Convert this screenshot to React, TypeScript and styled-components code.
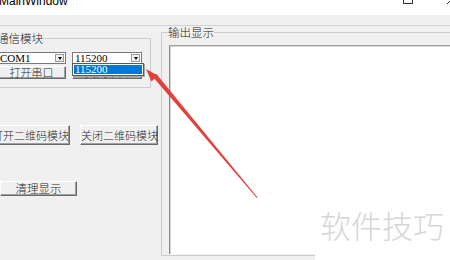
import styled, { createGlobalStyle } from 'styled-components';

const GlobalStyle = createGlobalStyle`
	html, body {
		margin: 0;
		padding: 0;
		background: #f0f0f0;
	}
	body {
		font-family: "Liberation Serif", "Noto Sans CJK SC", serif;
	}
`;

const CJK = `"Noto Sans CJK SC", "Liberation Sans", sans-serif`;

const App = (): JSX.Element => {
	return (
		<>
			<GlobalStyle />
			<StyledWindow>
				<StyledTitleBar>
					<StyledTitleRow>
						<StyledTitleText>MainWindow</StyledTitleText>
						<StyledControls>
							<StyledControl>
								<svg width="10" height="10" viewBox="0 0 10 10">
									<line x1="0" y1="5.5" x2="10" y2="5.5" stroke="#333" strokeWidth="1" />
								</svg>
							</StyledControl>
							<StyledControl>
								<svg width="10" height="10" viewBox="0 0 10 10">
									<rect x="0.5" y="0.5" width="9" height="9" fill="none" stroke="#333" strokeWidth="1" />
								</svg>
							</StyledControl>
							<StyledControl>
								<svg width="10" height="10" viewBox="0 0 10 10">
									<path d="M0 0 L10 10 M10 0 L0 10" stroke="#333" strokeWidth="1" />
								</svg>
							</StyledControl>
						</StyledControls>
					</StyledTitleRow>
				</StyledTitleBar>
				<StyledMenuBar />
				<StyledBody>
					<StyledLeftPanel>
						<StyledCommGroup>
							<StyledLegend>通信模块</StyledLegend>
							<StyledRow>
								<StyledCombo $w={69}>
									<StyledComboText>COM1</StyledComboText>
									<StyledComboArrow />
								</StyledCombo>
								<StyledCombo $w={70}>
									<StyledComboText>115200</StyledComboText>
									<StyledComboArrow />
									<StyledPopup>
										<StyledPopupItem>115200</StyledPopupItem>
									</StyledPopup>
								</StyledCombo>
							</StyledRow>
							<StyledRow $top={2}>
								<StyledButton $w={69} $h={13}>打开串口</StyledButton>
								<StyledButton $w={70} $h={13}>关闭串口</StyledButton>
							</StyledRow>
						</StyledCommGroup>
						<StyledQrRow>
							<StyledButton $w={79} $h={20}>打开二维码模块</StyledButton>
							<StyledButton $w={78} $h={20}>关闭二维码模块</StyledButton>
						</StyledQrRow>
						<StyledClearButton $w={77} $h={15} $fs={11.5}>清理显示</StyledClearButton>
					</StyledLeftPanel>
					<StyledOutputGroup>
						<StyledLegend $shift={-1}>输出显示</StyledLegend>
						<StyledTextEdit />
					</StyledOutputGroup>
				</StyledBody>
				<StyledArrow viewBox="0 0 450 260" width="450" height="260">
					<polygon points="152.8,76.8 156.2,73.8 257.6,197.6 257,198.2" fill="#e2403a" />
					<polygon points="146,69 158.2,75.8 151.4,81.6" fill="#e2403a" />
				</StyledArrow>
				<StyledWatermark>软件技巧</StyledWatermark>
			</StyledWindow>
		</>
	);
};

export default App;

const StyledWindow = styled.div`
	position: relative;
	width: 450px;
	height: 260px;
	overflow: hidden;
	background: #f0f0f0;
`;
const StyledTitleBar = styled.div`
	height: 15px;
	background: #fff;
	overflow: hidden;
`;
const StyledTitleRow = styled.div`
	display: flex;
	align-items: center;
	height: 30px;
	margin-top: -16px;
`;
const StyledTitleText = styled.div`
	margin-left: -1px;
	padding-top: 3px;
	font: 12px/12px "Liberation Sans", Arial, sans-serif;
	color: #000;
`;
const StyledControls = styled.div`
	display: flex;
	margin-left: auto;
	margin-right: -24px;
`;
const StyledControl = styled.div`
	display: flex;
	align-items: center;
	justify-content: center;
	width: 44px;
	height: 30px;
`;
const StyledMenuBar = styled.div`
	height: 10px;
	border-bottom: 1px solid #d2d2d2;
`;
const StyledBody = styled.div`
	display: flex;
	align-items: flex-start;
	height: 234px;
`;
const StyledLeftPanel = styled.div`
	display: flex;
	flex-direction: column;
	align-items: flex-start;
	flex-shrink: 0;
	width: 171px;
	margin-left: -10px;
`;
const StyledCommGroup = styled.fieldset`
	box-sizing: border-box;
	width: 159px;
	min-width: 0;
	margin: 6px 0 0 2px;
	padding: 8px 7px 8px 4px;
	border: 1px solid #cdcdcd;
`;
const StyledLegend = styled.legend<{ $shift?: number }>`
	padding: 0;
	margin-left: ${({ $shift }) => $shift ?? 0}px;
	font: 300 11.5px/12px ${CJK};
	color: #222;
`;
const StyledRow = styled.div<{ $top?: number }>`
	display: flex;
	gap: 6px;
	margin-top: ${({ $top }) => $top ?? 0}px;
`;
const StyledCombo = styled.div<{ $w: number }>`
	position: relative;
	display: flex;
	align-items: center;
	box-sizing: border-box;
	width: ${({ $w }) => $w}px;
	height: 12px;
	background: #fff;
	border: 1px solid #7a7a7a;
`;
const StyledComboText = styled.span`
	padding-left: 2px;
	font: 11px/10px "Liberation Serif", serif;
	color: #000;
`;
const StyledComboArrow = styled.span`
	display: flex;
	justify-content: center;
	box-sizing: border-box;
	width: 9px;
	height: 8px;
	margin-left: auto;
	margin-right: 1px;
	padding-top: 2px;
	background: #f0f0f0;
	border: 1px solid #9a9a9a;
	&::after {
		content: '';
		border-top: 3px solid #000;
		border-left: 2.5px solid transparent;
		border-right: 2.5px solid transparent;
		height: 0;
	}
`;
const StyledPopup = styled.div`
	position: absolute;
	left: -1px;
	top: 100%;
	z-index: 2;
	box-sizing: border-box;
	width: 72px;
	height: 13px;
	padding: 1px;
	background: #fff;
	border: 1px solid #5a5a5a;
	box-shadow: 1px 1px 0 #a8a8a8;
`;
const StyledPopupItem = styled.div`
	height: 9px;
	padding-left: 1px;
	background: #0078d7;
	color: #fff;
	font: 11px/9px "Liberation Serif", serif;
`;
type StyledButtonProps = {
	$w: number;
	$h: number;
	$fs?: number;
};
const StyledButton = styled.button<StyledButtonProps>`
	box-sizing: border-box;
	width: ${({ $w }) => $w}px;
	height: ${({ $h }) => $h}px;
	padding: 0;
	white-space: nowrap;
	overflow: visible;
	background: #f0f0f0;
	color: #2a2a2a;
	font: 300 ${({ $fs }) => $fs ?? 11}px/1 ${CJK};
	border-style: solid;
	border-width: 1px;
	border-color: #fff #696969 #696969 #fff;
	box-shadow: inset -1px -1px 0 #a0a0a0;
`;
const StyledQrRow = styled.div`
	display: flex;
	gap: 10px;
	margin: 37px 0 0 1px;
`;
const StyledClearButton = styled(StyledButton)`
	margin: 36px 0 0 10px;
`;
const StyledOutputGroup = styled.fieldset`
	box-sizing: border-box;
	flex-shrink: 0;
	width: 300px;
	min-width: 0;
	margin: 0;
	padding: 7px 0 1px 7px;
	border: 1px solid #cdcdcd;
	border-right: none;
`;
const StyledTextEdit = styled.div`
	height: 208px;
	background: #fff;
	border-top: 1px solid #a0a0a0;
	border-left: 1px solid #8a8a8a;
	box-shadow: inset 1px 1px 0 #d6d6d6;
`;
const StyledArrow = styled.svg`
	position: absolute;
	left: 0;
	top: 0;
	z-index: 5;
	pointer-events: none;
`;
const StyledWatermark = styled.div`
	position: absolute;
	left: 315px;
	top: 204px;
	z-index: 4;
	box-sizing: border-box;
	width: 135px;
	height: 56px;
	padding: 4px 0 0 5px;
	background: #fff;
	color: #d6d6d6;
	font: 300 31px/34px ${CJK};
	white-space: nowrap;
`;
